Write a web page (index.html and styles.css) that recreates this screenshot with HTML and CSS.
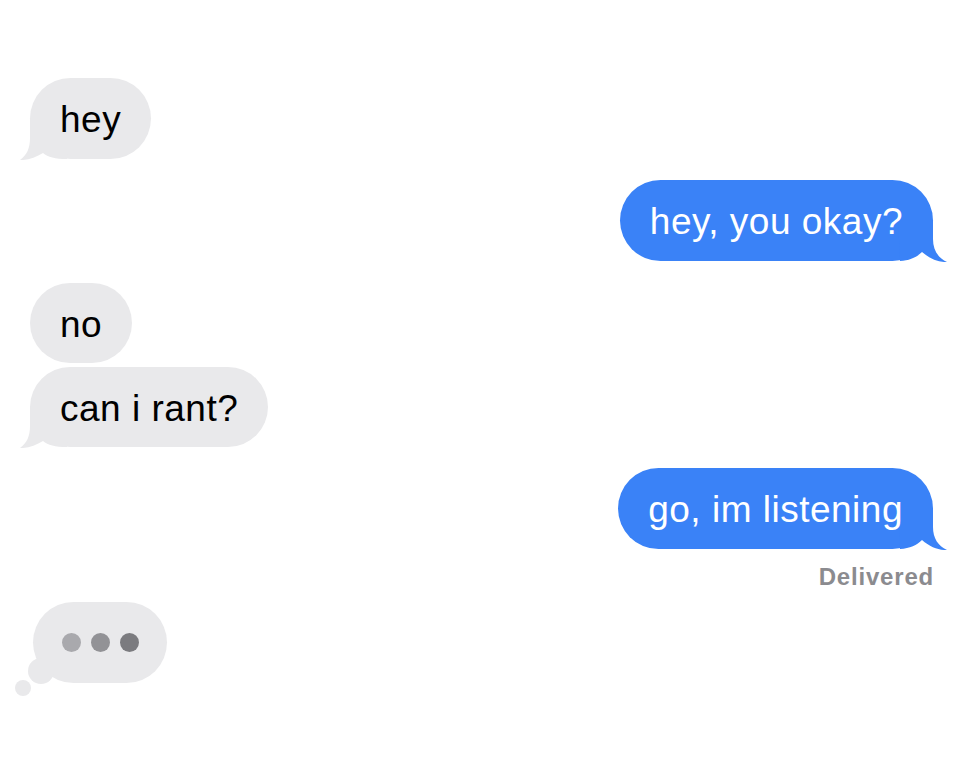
FILE: index.html
```html
<!DOCTYPE html>
<html lang="en">
<head>
<meta charset="utf-8">
<title>Messages</title>
<link rel="stylesheet" href="styles.css">
</head>
<body>
<main class="thread">
  <div class="bubble them">hey
    <svg class="tail-svg" viewBox="0 0 50 42" width="50" height="42" aria-hidden="true"><path d="M11 0 L11 20 C11 30 8 37 1 42 C9 42.5 17 39 24 35 C29 39 36 41 48 41 L50 0 Z"/></svg>
  </div>
  <div class="bubble me gap-lg">hey, you okay?
    <svg class="tail-svg" viewBox="0 0 50 42" width="50" height="42" aria-hidden="true"><path d="M35 0 L35 19 C35 30 40 38 49 42 C41 42.5 32 39 24 32 C19 37 12 40.5 2 41 L0 0 Z"/></svg>
  </div>
  <div class="bubble them short gap-lg2">no</div>
  <div class="bubble them short gap-sm">can i rant?
    <svg class="tail-svg" viewBox="0 0 50 42" width="50" height="42" aria-hidden="true"><path d="M11 0 L11 20 C11 30 8 37 1 42 C9 42.5 17 39 24 35 C29 39 36 41 48 41 L50 0 Z"/></svg>
  </div>
  <div class="bubble me gap-lg">go, im listening
    <svg class="tail-svg" viewBox="0 0 50 42" width="50" height="42" aria-hidden="true"><path d="M35 0 L35 19 C35 30 40 38 49 42 C41 42.5 32 39 24 32 C19 37 12 40.5 2 41 L0 0 Z"/></svg>
  </div>
  <div class="status">Delivered</div>
  <div class="typing">
    <span class="puff big"></span><span class="puff small"></span>
    <span class="dot d1"></span><span class="dot d2"></span><span class="dot d3"></span>
  </div>
</main>
</body>
</html>
```
FILE: styles.css
```css
html, body {
  margin: 0;
  padding: 0;
  background: #ffffff;
}
body {
  font-family: "Liberation Sans", Arial, sans-serif;
}
.thread {
  display: flex;
  flex-direction: column;
  padding: 78px 39px 70px 30px;
}
.bubble {
  position: relative;
  z-index: 0;
  box-sizing: border-box;
  height: 81px;
  padding: 3px 30px 0;
  line-height: 78px;
  font-size: 37px;
  letter-spacing: 0.5px;
  border-radius: 41px;
  white-space: nowrap;
}
.bubble.short {
  height: 80px;
  line-height: 77px;
}
.them {
  align-self: flex-start;
  background: #e9e9eb;
  color: #000;
}
.me {
  align-self: flex-end;
  background: #3a82f7;
  color: #fff;
}
.gap-lg { margin-top: 21px; }
.gap-lg2 { margin-top: 22px; }
.gap-sm { margin-top: 4px; }
.tail-svg {
  position: absolute;
  bottom: -1px;
  display: block;
  z-index: -1;
}
.them .tail-svg {
  left: -11px;
  fill: #e9e9eb;
}
.me .tail-svg {
  right: -15px;
  fill: #3a82f7;
}
.status {
  align-self: flex-end;
  margin-top: 14px;
  margin-right: -1px;
  font-size: 24px;
  line-height: 28px;
  font-weight: 700;
  letter-spacing: 0.8px;
  color: #8b8b8f;
}
.typing {
  position: relative;
  z-index: 0;
  align-self: flex-start;
  margin-top: 11px;
  margin-left: 3px;
  width: 134px;
  height: 81px;
  border-radius: 41px;
  background: #e9e9eb;
  display: flex;
  align-items: center;
  justify-content: center;
  gap: 10px;
}
.dot {
  width: 19px;
  height: 19px;
  border-radius: 50%;
}
.d1 { background: #a9a9ad; }
.d2 { background: #929296; }
.d3 { background: #7b7b7f; }
.puff {
  position: absolute;
  border-radius: 50%;
  background: #e9e9eb;
}
.puff.big {
  width: 26px;
  height: 26px;
  left: -5px;
  top: 56px;
  z-index: -1;
}
.puff.small {
  width: 16px;
  height: 16px;
  left: -18px;
  top: 78px;
}
```
